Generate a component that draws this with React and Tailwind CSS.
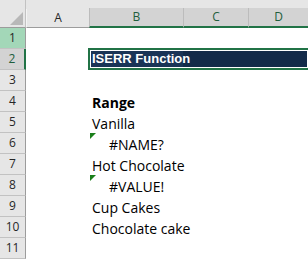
import React from 'react';

const rows = [
  { n: 1 },
  { n: 2 },
  { n: 3 },
  { n: 4, text: 'Range', bold: true },
  { n: 5, text: 'Vanilla' },
  { n: 6, text: '#NAME?', indent: true, flag: true },
  { n: 7, text: 'Hot Chocolate' },
  { n: 8, text: '#VALUE!', indent: true, flag: true },
  { n: 9, text: 'Cup Cakes' },
  { n: 10, text: 'Chocolate cake' },
  { n: 11 },
];

const cols = [
  { key: 'A', w: 'w-[63px]' },
  { key: 'B', w: 'w-[94px]', sel: true },
  { key: 'C', w: 'w-[65px]', sel: true },
  { key: 'D', w: 'flex-1', sel: true },
];

const RowHead = ({ n }) => {
  let cls = 'bg-[#e6e6e6] text-[#262626] border-r border-r-[#9c9c9c]';
  if (n === 1) cls = 'bg-[#a3d7b8] text-[#262626] border-r border-r-[#9c9c9c]';
  if (n === 2) cls = 'bg-[#d3d3d3] text-[#1e5e3c] border-r-2 border-r-[#217346]';
  return (
    <div className={`w-[26px] shrink-0 h-full flex items-center justify-center border-b border-b-[#c2c2c2] text-[12px] ${cls}`}>
      {n}
    </div>
  );
};

export default function App() {
  return (
    <div className="w-[308px] h-[260px] overflow-hidden bg-white" style={{ fontFamily: '"Open Sans", sans-serif' }}>
      {/* column headers */}
      <div className="flex h-[28px] bg-[#e6e6e6]">
        <div className="w-[26px] shrink-0 h-full relative border-r border-r-[#c2c2c2] border-b border-b-[#9c9c9c]">
          <svg width="26" height="28" className="block">
            <polygon points="10,25 23,25 23,12" fill="#b8b8b8" />
          </svg>
        </div>
        {cols.map((c) => (
          <div key={c.key} className={`${c.w} shrink-0 h-full flex flex-col`}>
            <div className="h-[9px]" />
            <div
              className={`flex-1 flex items-center justify-center text-[12px] border-l ${
                c.sel
                  ? 'bg-[#d3d3d3] border-l-[#bcbcbc] text-[#1e5e3c] border-b-2 border-b-[#217346]'
                  : 'border-l-[#f4f4f4] text-[#262626] border-b border-b-[#9c9c9c]'
              }`}
            >
              {c.key}
            </div>
          </div>
        ))}
      </div>

      {rows.map((r) => (
        <div key={r.n} className="flex h-[21px]">
          <RowHead n={r.n} />
          <div className="w-[63px] shrink-0" />
          {r.n === 2 ? (
            <div className="flex-1 -ml-px border-2 border-[#217346] border-r-0 h-[22px] -mt-px p-px bg-white">
              <div className="h-full flex bg-[#132a49]">
                <div className="w-[92px] shrink-0 bg-[#1a3456] flex items-center pl-px text-white font-bold text-[13px] whitespace-nowrap" style={{ fontFamily: '"Liberation Sans", Arial, sans-serif' }}>
                  ISERR Function
                </div>
              </div>
            </div>
          ) : (
            <div className="flex-1 relative flex items-center pl-[3px] pt-px text-[14px] text-black whitespace-nowrap">
              {r.flag && (
                <svg width="6" height="6" className="absolute left-px top-0">
                  <polygon points="0,0 6,0 0,6" fill="#1a7f1a" />
                </svg>
              )}
              <span className={`${r.indent ? 'pl-[17px]' : ''} ${r.bold ? 'font-bold' : ''}`}>{r.text}</span>
            </div>
          )}
        </div>
      ))}
    </div>
  );
}
